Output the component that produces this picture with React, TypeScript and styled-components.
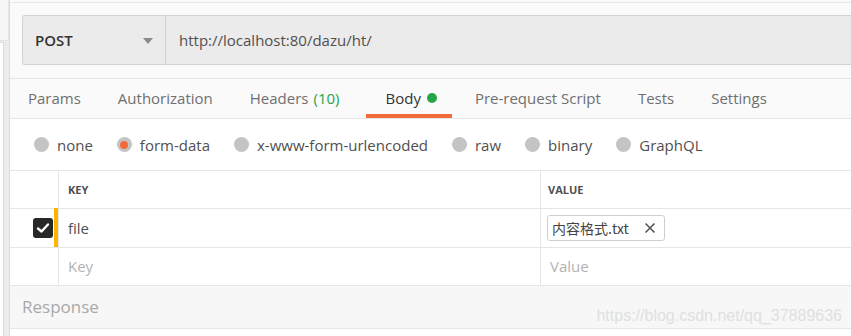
import React from "react";
import styled, { createGlobalStyle } from "styled-components";

const Global = createGlobalStyle`
  html, body { margin: 0; padding: 0; background: #fafafa; }
  body { font-family: "Open Sans", "Noto Sans", sans-serif; overflow: hidden; }
  * { box-sizing: border-box; }
`;

const Page = styled.div`
  display: flex;
  width: 851px;
  height: 336px;
  overflow: hidden;
  background: #fafafa;
`;

const LeftStrip = styled.div`
  width: 10px;
  flex: none;
  display: flex;
  flex-direction: column;
  background: #ececec;
  border-right: 1px solid #dcdcdc;
  box-shadow: 1px 0 2px rgba(0, 0, 0, 0.08);
`;

const StripTop = styled.div`
  height: 41px;
  width: 9px;
  background: #f7f7f7;
  border-right: 1px solid #e4e4e4;
  border-bottom: 1px solid #e4e4e4;
`;

const StripCard = styled.div`
  margin-top: 1px;
  width: 4px;
  flex: 1;
  background: #ffffff;
  border-right: 1px solid #dadada;
  border-top: 1px solid #dadada;
  border-top-right-radius: 2px;
`;

const Main = styled.div`
  flex: 1;
  display: flex;
  flex-direction: column;
  min-width: 0;
  background: #fafafa;
`;

const UrlSection = styled.div`
  margin-top: 2px;
  border-top: 1px solid #e6e6e6;
  border-bottom: 1px solid #e3e3e3;
  padding: 12px 0 13px 12px;
`;

const UrlBar = styled.div`
  display: flex;
  height: 50px;
  background: #ebebeb;
  border: 1px solid #d2d2d2;
  border-right: none;
  border-radius: 3px 0 0 3px;
`;

const Method = styled.div`
  width: 143px;
  flex: none;
  display: flex;
  align-items: center;
  justify-content: space-between;
  padding: 0 12px 0 12px;
  border-right: 1px solid #d2d2d2;
  font-size: 15px;
  font-weight: 600;
  color: #333333;
`;

const Caret = styled.span`
  width: 0;
  height: 0;
  border-left: 5px solid transparent;
  border-right: 5px solid transparent;
  border-top: 6px solid #8a8a8a;
  margin-top: 1px;
`;

const UrlText = styled.div`
  display: flex;
  align-items: center;
  padding-left: 13px;
  font-size: 15px;
  color: #505050;
`;

const Tabs = styled.div`
  display: flex;
  height: 40px;
  padding-left: 8px;
  border-bottom: 1px solid #e6e6e6;
`;

const Tab = styled.div<{ $active?: boolean }>`
  position: relative;
  display: flex;
  align-items: center;
  padding-bottom: 2px;
  margin-right: ${(p) => (p.$active ? "13px" : "17px")};
  font-size: 15px;
  color: ${(p) => (p.$active ? "#333333" : "#6f6f6f")};
  padding-left: ${(p) => (p.$active ? "19px" : "10px")};
  padding-right: ${(p) => (p.$active ? "15px" : "10px")};
  &::after {
    content: "";
    display: ${(p) => (p.$active ? "block" : "none")};
    position: absolute;
    left: 0;
    right: 0;
    bottom: 0;
    height: 4px;
    background: #f26b3a;
  }
`;

const Count = styled.span`
  color: #26a649;
  margin-left: 5px;
`;

const Dot = styled.span`
  width: 10px;
  height: 10px;
  border-radius: 50%;
  background: #26a649;
  margin-left: 6px;
`;

const RadioRow = styled.div`
  display: flex;
  align-items: center;
  height: 51px;
  padding-left: 24px;
  background: #ffffff;
`;

const RadioItem = styled.div`
  display: flex;
  align-items: center;
  margin-right: 24px;
  font-size: 15px;
  color: #505050;
`;

const RadioCircle = styled.span<{ $on?: boolean }>`
  width: 15px;
  height: 15px;
  border-radius: 50%;
  background: #c4c4c4;
  margin-right: 8px;
  display: flex;
  align-items: center;
  justify-content: center;
  &::after {
    content: "";
    display: ${(p) => (p.$on ? "block" : "none")};
    width: 8px;
    height: 8px;
    border-radius: 50%;
    background: #f26b3a;
  }
`;

const Table = styled.div`
  background: #ffffff;
  border-top: 1px solid #e6e6e6;
  border-bottom: 1px solid #e6e6e6;
`;

const Row = styled.div<{ $h: number }>`
  display: grid;
  grid-template-columns: 49px 482px 1fr;
  height: ${(p) => p.$h}px;
  & + & {
    border-top: 1px solid #e6e6e6;
  }
`;

const CheckCell = styled.div<{ $mark?: boolean }>`
  position: relative;
  display: flex;
  align-items: center;
  padding-left: 23px;
  border-right: 1px solid #e6e6e6;
  &::after {
    content: "";
    display: ${(p) => (p.$mark ? "block" : "none")};
    position: absolute;
    right: 0;
    top: -1px;
    bottom: 0;
    width: 4px;
    background: #ffb400;
  }
`;

const Cell = styled.div<{ $head?: boolean; $muted?: boolean; $pad?: number }>`
  display: flex;
  align-items: center;
  padding-left: ${(p) => p.$pad ?? 9}px;
  padding-bottom: ${(p) => (p.$muted ? "2px" : "0")};
  border-right: 1px solid #e6e6e6;
  font-size: ${(p) => (p.$head ? "11px" : "15px")};
  font-weight: ${(p) => (p.$head ? 700 : 400)};
  color: ${(p) => (p.$head ? "#505050" : p.$muted ? "#b3b3b3" : "#505050")};
  &:last-child { border-right: none; }
`;

const Checkbox = styled.span`
  width: 20px;
  height: 20px;
  border-radius: 3px;
  background: #282828;
  display: flex;
  align-items: center;
  justify-content: center;
`;

const FileTag = styled.div`
  display: flex;
  align-items: center;
  height: 26px;
  padding: 0 8px 0 4px;
  border: 1px solid #cfcfcf;
  border-radius: 3px;
  font-family: "Noto Sans CJK SC", "Noto Sans", sans-serif;
  font-size: 14px;
  color: #444444;
  background: #ffffff;
`;

const CloseIcon = styled.svg`
  margin-left: 15px;
  flex: none;
`;

const Response = styled.div`
  position: relative;
  height: 43px;
  display: flex;
  align-items: center;
  padding-left: 12px;
  padding-bottom: 2px;
  font-size: 17px;
  color: #a9a9a9;
  background: #f7f7f7;
  border-bottom: 1px solid #e6e6e6;
`;

const Watermark = styled.span`
  position: absolute;
  right: 9px;
  top: 21px;
  font-family: "Liberation Sans", Arial, sans-serif;
  font-size: 16px;
  color: #e0e0e0;
`;

const Bottom = styled.div`
  flex: 1;
  background: #ffffff;
`;

const radios = [
  { label: "none" },
  { label: "form-data", on: true },
  { label: "x-www-form-urlencoded" },
  { label: "raw" },
  { label: "binary" },
  { label: "GraphQL" },
];

export default function App() {
  return (
    <>
      <Global />
      <Page>
        <LeftStrip>
          <StripTop />
          <StripCard />
        </LeftStrip>
        <Main>
          <UrlSection>
            <UrlBar>
              <Method>
                POST
                <Caret />
              </Method>
              <UrlText>http://localhost:80/dazu/ht/</UrlText>
            </UrlBar>
          </UrlSection>
          <Tabs>
            <Tab>Params</Tab>
            <Tab>Authorization</Tab>
            <Tab>
              Headers<Count>(10)</Count>
            </Tab>
            <Tab $active>
              Body<Dot />
            </Tab>
            <Tab>Pre-request Script</Tab>
            <Tab>Tests</Tab>
            <Tab>Settings</Tab>
          </Tabs>
          <RadioRow>
            {radios.map((r) => (
              <RadioItem key={r.label}>
                <RadioCircle $on={r.on} />
                {r.label}
              </RadioItem>
            ))}
          </RadioRow>
          <Table>
            <Row $h={37}>
              <CheckCell />
              <Cell $head>KEY</Cell>
              <Cell $head $pad={7}>VALUE</Cell>
            </Row>
            <Row $h={39}>
              <CheckCell $mark>
                <Checkbox>
                  <svg width="14" height="12" viewBox="0 0 14 12">
                    <path d="M2 6.5 L5.5 9.5 L12 2.5" fill="none" stroke="#ffffff" strokeWidth="2.4" strokeLinecap="round" strokeLinejoin="round" />
                  </svg>
                </Checkbox>
              </CheckCell>
              <Cell>file</Cell>
              <Cell $pad={6}>
                <FileTag>
                  内容格式.txt
                  <CloseIcon width="12" height="12" viewBox="0 0 12 12">
                    <path d="M1.5 1.5 L10.5 10.5 M10.5 1.5 L1.5 10.5" stroke="#555555" strokeWidth="1.6" />
                  </CloseIcon>
                </FileTag>
              </Cell>
            </Row>
            <Row $h={38}>
              <CheckCell />
              <Cell $muted>Key</Cell>
              <Cell $muted>Value</Cell>
            </Row>
          </Table>
          <Response>
            Response
            <Watermark>https://blog.csdn.net/qq_37889636</Watermark>
          </Response>
          <Bottom />
        </Main>
      </Page>
    </>
  );
}
